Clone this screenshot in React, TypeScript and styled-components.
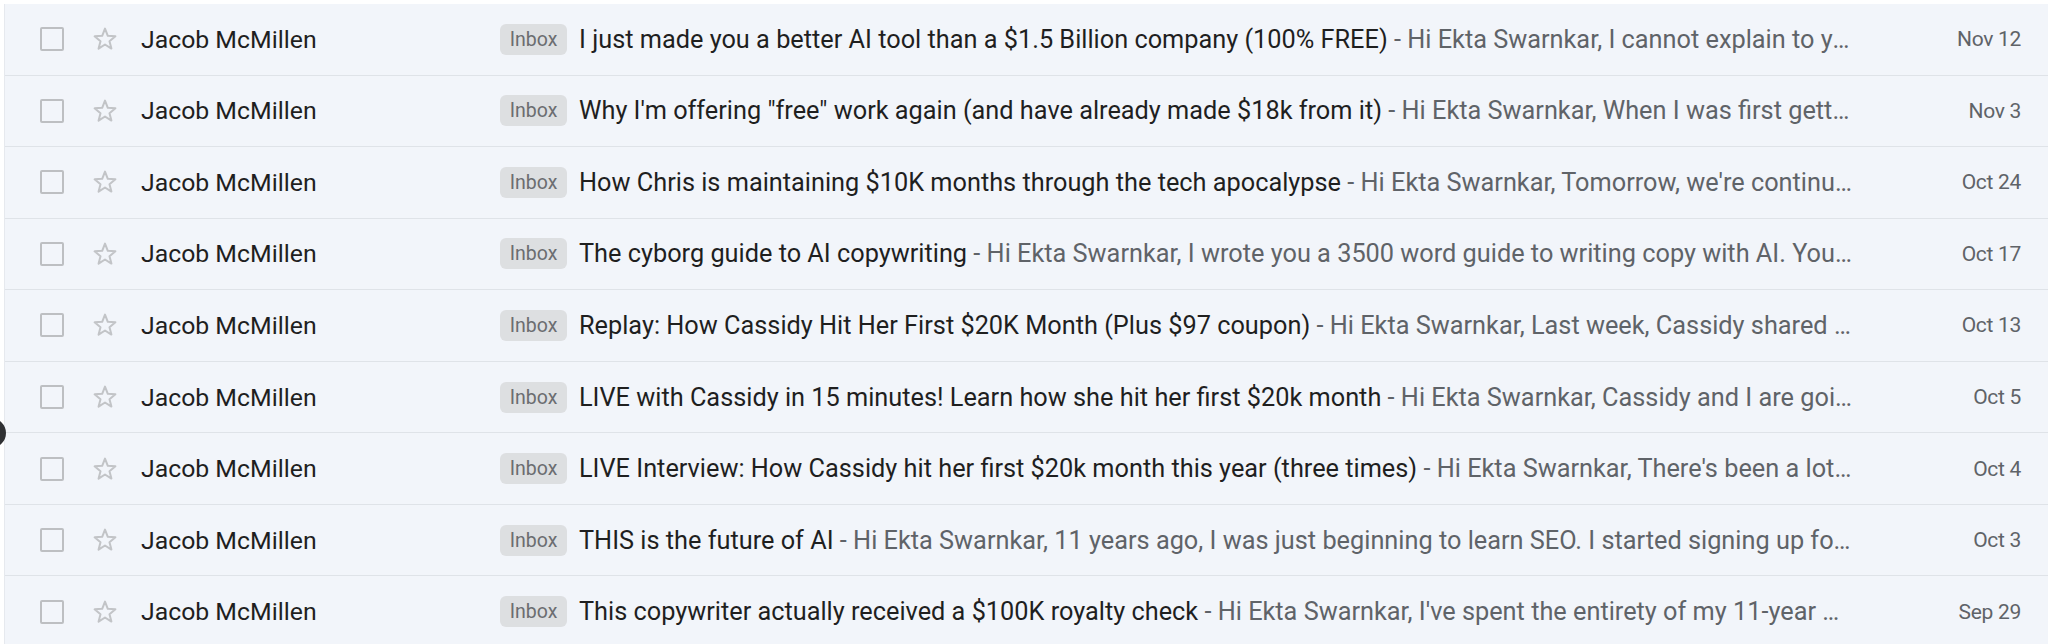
import React from "react";
import styled, { createGlobalStyle } from "styled-components";

const GlobalStyle = createGlobalStyle`
  html, body {
    margin: 0;
    padding: 0;
    background: #ffffff;
    overflow: hidden;
  }
  body {
    font-family: Roboto, "Noto Sans", Arial, sans-serif;
  }
`;

const Page = styled.div`
  position: relative;
  width: 2048px;
  height: 644px;
  padding: 4px 0 0 4px;
  box-sizing: border-box;
  background: #ffffff;
  overflow: hidden;
`;

const List = styled.div`
  background: #f2f5fa;
  border-left: 1px solid #e6e9ee;
`;

const Row = styled.div`
  display: flex;
  align-items: center;
  height: 71.55px;
  box-sizing: border-box;
  padding-left: 35px;
  border-bottom: 1px solid #dfe3e8;
  color: #1f1f1f;
`;

const Check = styled.span`
  flex: none;
  width: 24px;
  height: 24px;
  box-sizing: border-box;
  border: 2.5px solid #bdbfc2;
  border-radius: 2px;
  margin-right: 27px;
`;

const StarBox = styled.span`
  flex: none;
  width: 28px;
  height: 28px;
  margin-right: 22px;
  display: flex;
  svg {
    display: block;
  }
`;

const Sender = styled.span`
  flex: none;
  width: 359px;
  white-space: nowrap;
  font-size: 24.8px;
`;

const Badge = styled.span`
  flex: none;
  height: 31px;
  width: 67px;
  box-sizing: border-box;
  display: flex;
  align-items: center;
  justify-content: center;
  background: #dddfe1;
  border-radius: 6px;
  color: #6b6d70;
  font-size: 19.5px;
  margin-right: 12px;
`;

const Line = styled.span`
  flex: 1;
  min-width: 0;
  white-space: nowrap;
  overflow: hidden;
  text-overflow: ellipsis;
  color: #5f6368;
  font-size: 25.3px;
`;

const Subject = styled.span`
  color: #1f1f1f;
`;

const DateCell = styled.span`
  flex: none;
  width: 196px;
  box-sizing: border-box;
  padding-right: 27px;
  text-align: right;
  color: #5f6368;
  font-size: 21px;
  letter-spacing: -0.3px;
`;

const Dot = styled.span`
  position: absolute;
  left: -24px;
  top: 418px;
  width: 30px;
  height: 30px;
  border-radius: 50%;
  background: #2f3033;
`;

type Mail = { subject: string; preview: string; date: string };

const mails: Mail[] = [
  {
    subject: "I just made you a better AI tool than a $1.5 Billion company (100% FREE)",
    preview: "Hi Ekta Swarnkar, I cannot explain to you how excited I am about this",
    date: "Nov 12",
  },
  {
    subject: "Why I'm offering \"free\" work again (and have already made $18k from it)",
    preview: "Hi Ekta Swarnkar, When I was first getting started",
    date: "Nov 3",
  },
  {
    subject: "How Chris is maintaining $10K months through the tech apocalypse",
    preview: "Hi Ekta Swarnkar, Tomorrow, we're continuing our series",
    date: "Oct 24",
  },
  {
    subject: "The cyborg guide to AI copywriting",
    preview: "Hi Ekta Swarnkar, I wrote you a 3500 word guide to writing copy with AI. You can read it here",
    date: "Oct 17",
  },
  {
    subject: "Replay: How Cassidy Hit Her First $20K Month (Plus $97 coupon)",
    preview: "Hi Ekta Swarnkar, Last week, Cassidy shared her story",
    date: "Oct 13",
  },
  {
    subject: "LIVE with Cassidy in 15 minutes! Learn how she hit her first $20k month",
    preview: "Hi Ekta Swarnkar, Cassidy and I are going live",
    date: "Oct 5",
  },
  {
    subject: "LIVE Interview: How Cassidy hit her first $20k month this year (three times)",
    preview: "Hi Ekta Swarnkar, There's been a lot going on",
    date: "Oct 4",
  },
  {
    subject: "THIS is the future of AI",
    preview: "Hi Ekta Swarnkar, 11 years ago, I was just beginning to learn SEO. I started signing up for every newsletter",
    date: "Oct 3",
  },
  {
    subject: "This copywriter actually received a $100K royalty check",
    preview: "Hi Ekta Swarnkar, I've spent the entirety of my 11-year career",
    date: "Sep 29",
  },
];

const Star = () => (
  <svg width="28" height="28" viewBox="0 0 28 28">
    <polygon
      points="14,3.6 16.8,10.8 24.4,11.3 18.5,16.2 20.4,23.6 14,19.5 7.6,23.6 9.5,16.2 3.6,11.3 11.2,10.8"
      fill="none"
      stroke="#c2c4c7"
      strokeWidth="2"
      strokeLinejoin="round"
    />
  </svg>
);

const App = () => {
  return (
    <Page>
      <GlobalStyle />
      <List>
        {mails.map((m, i) => (
          <Row key={i}>
            <Check />
            <StarBox>
              <Star />
            </StarBox>
            <Sender>Jacob McMillen</Sender>
            <Badge>Inbox</Badge>
            <Line>
              <Subject>{m.subject}</Subject> - {m.preview}
            </Line>
            <DateCell>{m.date}</DateCell>
          </Row>
        ))}
      </List>
      <Dot />
    </Page>
  );
};

export default App;
